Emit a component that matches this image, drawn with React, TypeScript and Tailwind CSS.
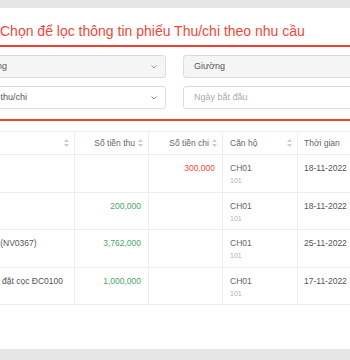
import React from "react";

const ROWS = [
  { desc: "Chi tiền", thu: "", chi: "300,000", can: "CH01", sub: "101", date: "18-11-2022" },
  { desc: "Thu phí", thu: "200,000", chi: "", can: "CH01", sub: "101", date: "18-11-2022" },
  { desc: "Thu phí (NV0367)", thu: "3,762,000", chi: "", can: "CH01", sub: "101", date: "25-11-2022" },
  { desc: "Thu tiền đặt cọc ĐC0100", thu: "1,000,000", chi: "", can: "CH01", sub: "101", date: "17-11-2022" },
];

function SortIcon() {
  return (
    <svg width="5" height="8" viewBox="0 0 5 8" className="shrink-0">
      <polygon points="2.5,0 5,3 0,3" fill="#c8ccd4" />
      <polygon points="0,5 5,5 2.5,8" fill="#c8ccd4" />
    </svg>
  );
}

function Chevron() {
  return (
    <svg width="6" height="4" viewBox="0 0 6 4" className="shrink-0">
      <path d="M0.5 0.5 L3 3 L5.5 0.5" fill="none" stroke="#8a8a8a" strokeWidth="0.9" />
    </svg>
  );
}

function SelectBox({ label, gray, placeholder, chevron }: { label: string; gray?: boolean; placeholder?: boolean; chevron?: boolean }) {
  return (
    <div
      className={`flex h-[23px] items-center justify-between rounded-[3px] border border-[#dcdcdc] pl-[10px] pr-[8px] text-[9px] ${
        gray ? "bg-[#f5f5f5]" : "bg-white"
      } ${placeholder ? "text-[#aaaaaa]" : "text-[#555555]"}`}
    >
      <span className="whitespace-nowrap">{label}</span>
      {chevron && <Chevron />}
    </div>
  );
}

export default function App() {
  return (
    <div className="h-[360px] w-[350px] overflow-hidden bg-[#e6e6e6] font-['Liberation_Sans',Arial,sans-serif]">
      <div className="mt-[8px] h-[341px] overflow-hidden bg-white">
        <div className="ml-[-40px] w-[520px]">
          <div className="border-b-2 border-[#f5412f] pb-[5px] pl-[40px] pt-[14px]">
            <h1 className="whitespace-nowrap text-[14px] leading-[18px] text-[#f2463a]">
              Chọn để lọc thông tin phiếu Thu/chi theo nhu cầu
            </h1>
          </div>

          <div className="border-b-2 border-[#f5412f] px-[10px] pb-[10px] pt-[8px]">
            <div className="grid grid-cols-[196px_196px] gap-x-[17px] gap-y-[8px]">
              <SelectBox label="Phòng" gray chevron />
              <SelectBox label="Giường" gray />
              <SelectBox label="Loại thu/chi" chevron />
              <SelectBox label="Ngày bắt đầu" placeholder />
            </div>
          </div>

          <div className="ml-[2px] mt-[10px] text-[8.5px]">
            <div className="grid h-[24px] grid-cols-[113px_74px_74px_75px_140px] border-y border-[#eceef3] text-[#666666]">
              <div className="flex items-center justify-between border-r border-[#eceef3] pl-[7px] pr-[5px]">
                <span>Mô tả</span>
                <SortIcon />
              </div>
              <div className="flex items-center justify-end gap-[3px] border-r border-[#eceef3] pr-[5px]">
                <span className="whitespace-nowrap">Số tiền thu</span>
                <SortIcon />
              </div>
              <div className="flex items-center justify-end gap-[3px] border-r border-[#eceef3] pr-[5px]">
                <span className="whitespace-nowrap">Số tiền chi</span>
                <SortIcon />
              </div>
              <div className="flex items-center justify-between border-r border-[#eceef3] pl-[7px] pr-[5px]">
                <span>Căn hộ</span>
                <SortIcon />
              </div>
              <div className="flex items-center border-r border-[#eceef3] pl-[6px]">
                <span>Thời gian</span>
              </div>
            </div>

            {ROWS.map((r, i) => (
              <div
                key={i}
                className="grid h-[37.5px] grid-cols-[113px_74px_74px_75px_140px] border-b border-[#eceef3] text-[#555555]"
              >
                <div className="whitespace-nowrap border-r border-[#eceef3] pl-[7px] pt-[6px] leading-[14px]">{r.desc}</div>
                <div className="border-r border-[#eceef3] pr-[7px] pt-[6px] text-right leading-[14px] text-[#4aa765]">{r.thu}</div>
                <div className="border-r border-[#eceef3] pr-[7px] pt-[6px] text-right leading-[14px] text-[#f5493c]">{r.chi}</div>
                <div className="border-r border-[#eceef3] pl-[7px] pt-[6px]">
                  <div className="leading-[14px] text-[#666666]">{r.can}</div>
                  <div className="text-[7px] leading-[12px] text-[#b0b0b0]">{r.sub}</div>
                </div>
                <div className="border-r border-[#eceef3] pl-[6px] pt-[6px] leading-[14px]">{r.date}</div>
              </div>
            ))}
          </div>
        </div>
      </div>
    </div>
  );
}
